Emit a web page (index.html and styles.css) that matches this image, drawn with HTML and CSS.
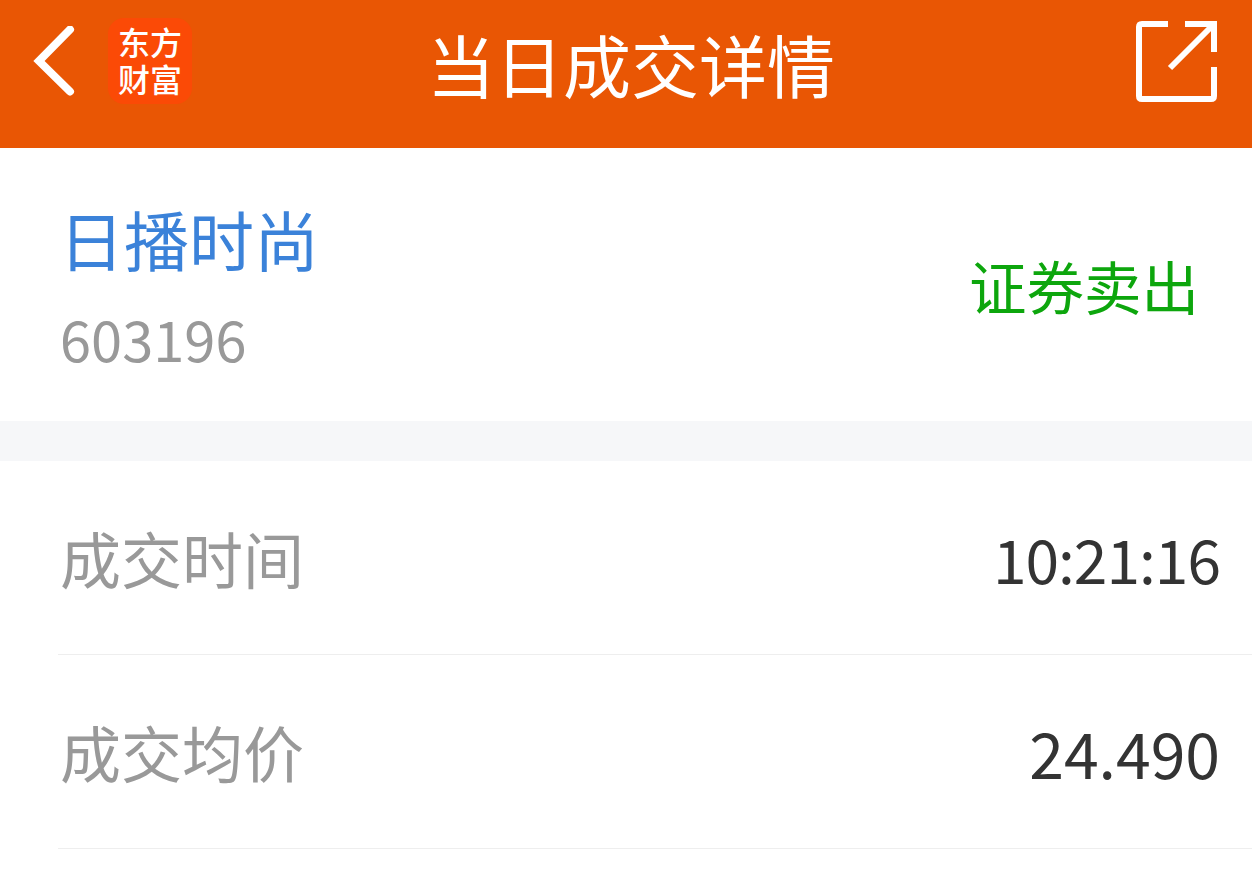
FILE: index.html
```html
<!DOCTYPE html>
<html>
<head>
  <meta charset="utf-8">
  <title>当日成交详情</title>
  <link rel="stylesheet" href="styles.css">
</head>
<body>
  <div class="header">
    <div class="header-left">
      <svg class="back" width="44" height="72" viewBox="0 0 44 72">
        <path d="M37 3.500 L6 35 L37 65.500" fill="none" stroke="#fff" stroke-width="8" stroke-linecap="round" stroke-linejoin="miter"/>
      </svg>
      <div class="logo"><span>东方</span><span>财富</span></div>
    </div>
    <div class="title">当日成交详情</div>
    <svg class="share" width="84" height="84" viewBox="0 0 84 84">
      <path d="M34 5 H8 Q5 5 5 8 V77 Q5 80 8 80 H77 Q80 80 80 77 V48" fill="none" stroke="#fff" stroke-width="6"/>
      <path d="M51 5 H80 V33" fill="none" stroke="#fff" stroke-width="6"/>
      <path d="M78 7 L36 49" fill="none" stroke="#fff" stroke-width="6"/>
    </svg>
  </div>
  <div class="stock">
    <div>
      <div class="stock-name">日播时尚</div>
      <div class="stock-code">603196</div>
    </div>
    <div class="stock-side">证券卖出</div>
  </div>
  <div class="gap"></div>
  <div class="row">
    <div class="label">成交时间</div>
    <div class="value time">10:21:16</div>
  </div>
  <div class="row">
    <div class="label">成交均价</div>
    <div class="value">24.490</div>
  </div>
</body>
</html>
```

FILE: styles.css
```css
html, body {
  margin: 0;
  height: 892px;
  overflow: hidden;
  background: #fff;
  font-family: "Noto Sans CJK SC", "Noto Sans", sans-serif;
}

.header {
  height: 148px;
  background: #e95604;
  display: flex;
  align-items: flex-start;
  justify-content: space-between;
  position: relative;
}
.header-left {
  display: flex;
  align-items: flex-start;
  padding: 18px 0 0 33px;
}
.back {
  margin-top: 8px;
}
.logo {
  width: 84px;
  height: 86px;
  margin-left: 31px;
  padding-bottom: 3px;
  box-sizing: border-box;
  background: #fb4a06;
  border-radius: 16px;
  color: #fff;
  font-size: 32px;
  line-height: 37px;
  font-weight: 500;
  display: flex;
  flex-direction: column;
  align-items: center;
  justify-content: center;
}
.title {
  position: absolute;
  left: 10px;
  right: 0;
  top: 0;
  text-align: center;
  color: #fff;
  font-size: 68px;
  line-height: 128px;
}
.share {
  margin: 19px 34px 0 0;
}

.stock {
  height: 273px;
  display: flex;
  align-items: flex-start;
  justify-content: space-between;
  padding: 0 53px 0 60px;
}
.stock-name {
  color: #3b82d9;
  font-size: 65px;
  line-height: 80px;
  margin: 50px 0 0 -1px;
}
.stock-code {
  color: #999;
  font-size: 56px;
  line-height: 60px;
  margin-top: 30px;
}
.stock-side {
  color: #0da60d;
  font-size: 57.5px;
  line-height: 70px;
  margin-top: 102px;
}

.gap {
  height: 40px;
  background: #f6f7f9;
}

.row {
  height: 193px;
  margin-left: 58px;
  padding-right: 32px;
  border-bottom: 1px solid #eeeeee;
  display: flex;
  align-items: center;
  justify-content: space-between;
}
.label {
  color: #999;
  font-size: 61px;
  margin-left: 2px;
}
.value {
  color: #333;
  font-size: 62.5px;
}
.time {
  font-size: 60.5px;
  letter-spacing: -1px;
}
```
